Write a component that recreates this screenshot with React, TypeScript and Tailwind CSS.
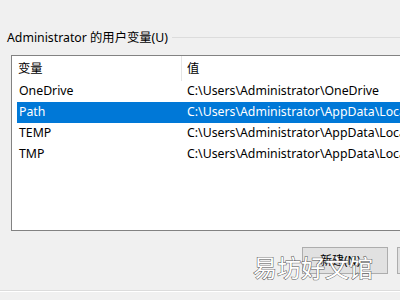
import React from "react";

const rows = [
  { name: "OneDrive", value: "C:\\Users\\Administrator\\OneDrive", selected: false },
  { name: "Path", value: "C:\\Users\\Administrator\\AppData\\Local\\Microsoft\\WindowsApps;", selected: true },
  { name: "TEMP", value: "C:\\Users\\Administrator\\AppData\\Local\\Temp", selected: false },
  { name: "TMP", value: "C:\\Users\\Administrator\\AppData\\Local\\Temp", selected: false },
];

export default function App() {
  return (
    <div
      className="relative w-[400px] h-[300px] overflow-hidden bg-[#f0f0f0] text-[12.3px] text-black"
      style={{ fontFamily: '"Noto Sans", "Noto Sans CJK SC", sans-serif' }}
    >
      <div className="flex items-center pt-[28px] h-[47px]">
        <span className="pl-[7px] leading-[19px] whitespace-nowrap shrink-0">Administrator 的用户变量(U)</span>
        <div className="flex-1 ml-[4px] h-px bg-[#dcdcdc]" />
      </div>
      <div className="ml-[11px] mt-[8px] h-[176px] border border-r-0 border-[#828282] bg-white overflow-hidden">
        <div className="flex h-[25px] items-center">
          <div className="w-[169px] shrink-0 pl-[6px] pt-[2px] whitespace-nowrap">变量</div>
          <div className="w-px shrink-0 h-full bg-[#e5e5e5]" />
          <div className="pl-[5px] pt-[2px] whitespace-nowrap shrink-0">值</div>
        </div>
        <div className="flex flex-col">
          {rows.map((r) => (
            <div
              key={r.name}
              className={`ml-[5px] flex h-[21px] items-center whitespace-nowrap ${
                r.selected ? "bg-[#0078d7] text-white" : ""
              }`}
            >
              <div className="w-[170px] shrink-0 pl-[2px]">{r.name}</div>
              <div className="shrink-0">{r.value}</div>
            </div>
          ))}
        </div>
      </div>
      <div className="flex mt-[16px] h-[27px]">
        <div className="ml-[302px] shrink-0 w-[86px] h-[27px] border border-[#adadad] bg-[#e1e1e1] flex items-center justify-center text-[12px] whitespace-nowrap">
          新建(N)...
        </div>
        <div className="ml-[9px] shrink-0 w-[86px] h-[27px] border border-[#adadad] bg-[#e1e1e1]" />
      </div>
      <div className="mt-[16px] h-px bg-[#dcdcdc]" />
      <div className="h-px bg-white" />
      <div
        className="absolute left-[253px] top-[252px] text-[24px] leading-[30px] text-white whitespace-nowrap"
        style={{
          fontFamily: '"Noto Sans CJK SC", sans-serif',
          WebkitTextStroke: "1px #555",
          paintOrder: "stroke fill",
        }}
      >
        易坊好文馆
      </div>
    </div>
  );
}
